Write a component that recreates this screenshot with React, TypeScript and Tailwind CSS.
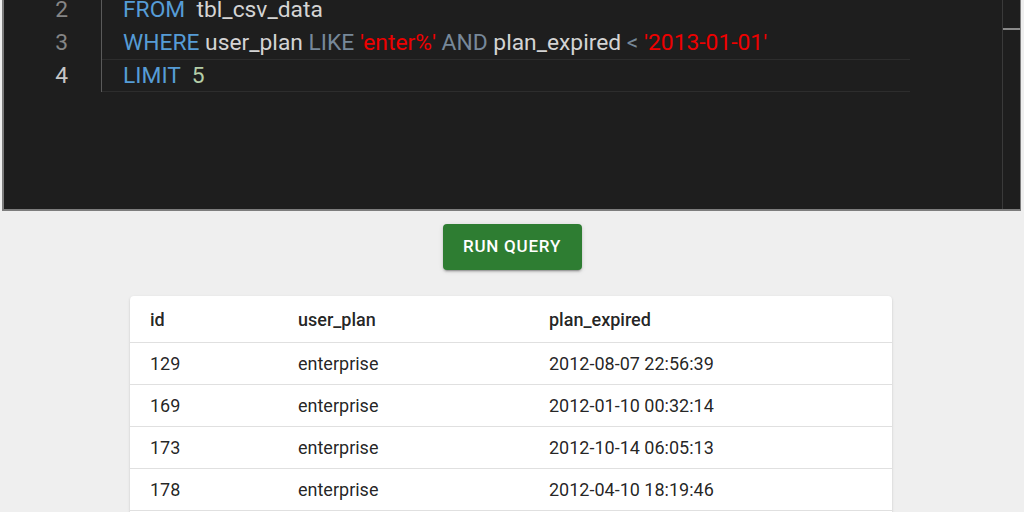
import React from 'react';

type Tok = { t: string; c: string };

const KW = 'text-[#569cd6]';
const ID = 'text-[#d4d4d4]';
const OP = 'text-[#778899]';
const STR = 'text-[#ee0000]';
const NUM = 'text-[#b5cea8]';

const lines: Tok[][] = [
  [
    { t: 'SELECT', c: KW },
    { t: ' id, user_plan, plan_expired', c: ID },
  ],
  [
    { t: 'FROM', c: KW },
    { t: '  tbl_csv_data', c: ID },
  ],
  [
    { t: 'WHERE', c: KW },
    { t: ' user_plan ', c: ID },
    { t: 'LIKE', c: OP },
    { t: ' ', c: ID },
    { t: "'enter%'", c: STR },
    { t: ' ', c: ID },
    { t: 'AND', c: OP },
    { t: ' plan_expired ', c: ID },
    { t: '<', c: OP },
    { t: ' ', c: ID },
    { t: "'2013-01-01'", c: STR },
  ],
  [
    { t: 'LIMIT', c: KW },
    { t: '  ', c: ID },
    { t: '5', c: NUM },
  ],
];

const rows = [
  ['129', 'enterprise', '2012-08-07 22:56:39'],
  ['169', 'enterprise', '2012-01-10 00:32:14'],
  ['173', 'enterprise', '2012-10-14 06:05:13'],
  ['178', 'enterprise', '2012-04-10 18:19:46'],
  ['188', 'enterprise', '2012-06-21 09:41:02'],
];

function Editor() {
  const active = lines.length - 1;
  return (
    <div className="relative ml-[2px] h-[211px] w-[1019px] overflow-hidden border-b-2 border-l-2 border-r border-[#7d7d7d] bg-[#1e1e1e] font-['Roboto',sans-serif] text-[22.8px]">
      <div className="mt-[-40px] flex">
        {/* gutter */}
        <div className="w-[97px] shrink-0 pr-[33px] text-right">
          {lines.map((_, i) => (
            <div
              key={i}
              className={`h-[33px] leading-[33px] ${i === active ? 'text-[#c6c6c6]' : 'text-[#858585]'}`}
            >
              {i + 1}
            </div>
          ))}
        </div>
        <div className="w-[809px] border-l border-[#5a5a5a]">
          {lines.map((toks, i) => (
            <div
              key={i}
              className={`h-[33px] whitespace-pre pl-[21px] leading-[31px] ${
                i === active ? 'border-y border-[#2d2d2d]' : 'border-y border-transparent'
              }`}
            >
              {toks.map((tk, j) => (
                <span key={j} className={tk.c}>
                  {tk.t}
                </span>
              ))}
            </div>
          ))}
        </div>
      </div>
      {/* vertical scrollbar */}
      <div className="absolute right-0 top-0 h-full w-[18px] border-l border-[#3a3a3a]">
        <div className="mt-[28px] h-[2px] w-full bg-[#8a8a8a]" />
      </div>
    </div>
  );
}

export default function App() {
  return (
    <div className="min-h-screen bg-[#efefef] pb-10 font-['Roboto',sans-serif]">
      <Editor />
      <div className="mt-[13px] flex justify-center">
        <button className="h-[46px] w-[139px] rounded-[4px] bg-[#2e7d32] text-[17px] font-medium tracking-[0.045em] text-white shadow-[0_3px_1px_-2px_rgba(0,0,0,0.2),0_2px_2px_0_rgba(0,0,0,0.14),0_1px_5px_0_rgba(0,0,0,0.12)]">
          RUN QUERY
        </button>
      </div>
      <div className="ml-[130px] mt-[26px] w-[762px] overflow-hidden rounded-[4px] bg-white text-[18px] text-[rgba(0,0,0,0.87)] shadow-[0_2px_1px_-1px_rgba(0,0,0,0.2),0_1px_1px_0_rgba(0,0,0,0.14),0_1px_3px_0_rgba(0,0,0,0.12)]">
        <div className="grid h-[47px] grid-cols-[148px_251px_1fr] items-center border-b border-[#e0e0e0] font-medium">
          <div className="pl-[20px]">id</div>
          <div className="pl-[20px]">user_plan</div>
          <div className="pl-[20px]">plan_expired</div>
        </div>
        {rows.map((r) => (
          <div
            key={r[0]}
            className="grid h-[42px] grid-cols-[148px_251px_1fr] items-center border-b border-[#e0e0e0]"
          >
            <div className="pl-[20px]">{r[0]}</div>
            <div className="pl-[20px]">{r[1]}</div>
            <div className="pl-[20px]">{r[2]}</div>
          </div>
        ))}
      </div>
    </div>
  );
}
